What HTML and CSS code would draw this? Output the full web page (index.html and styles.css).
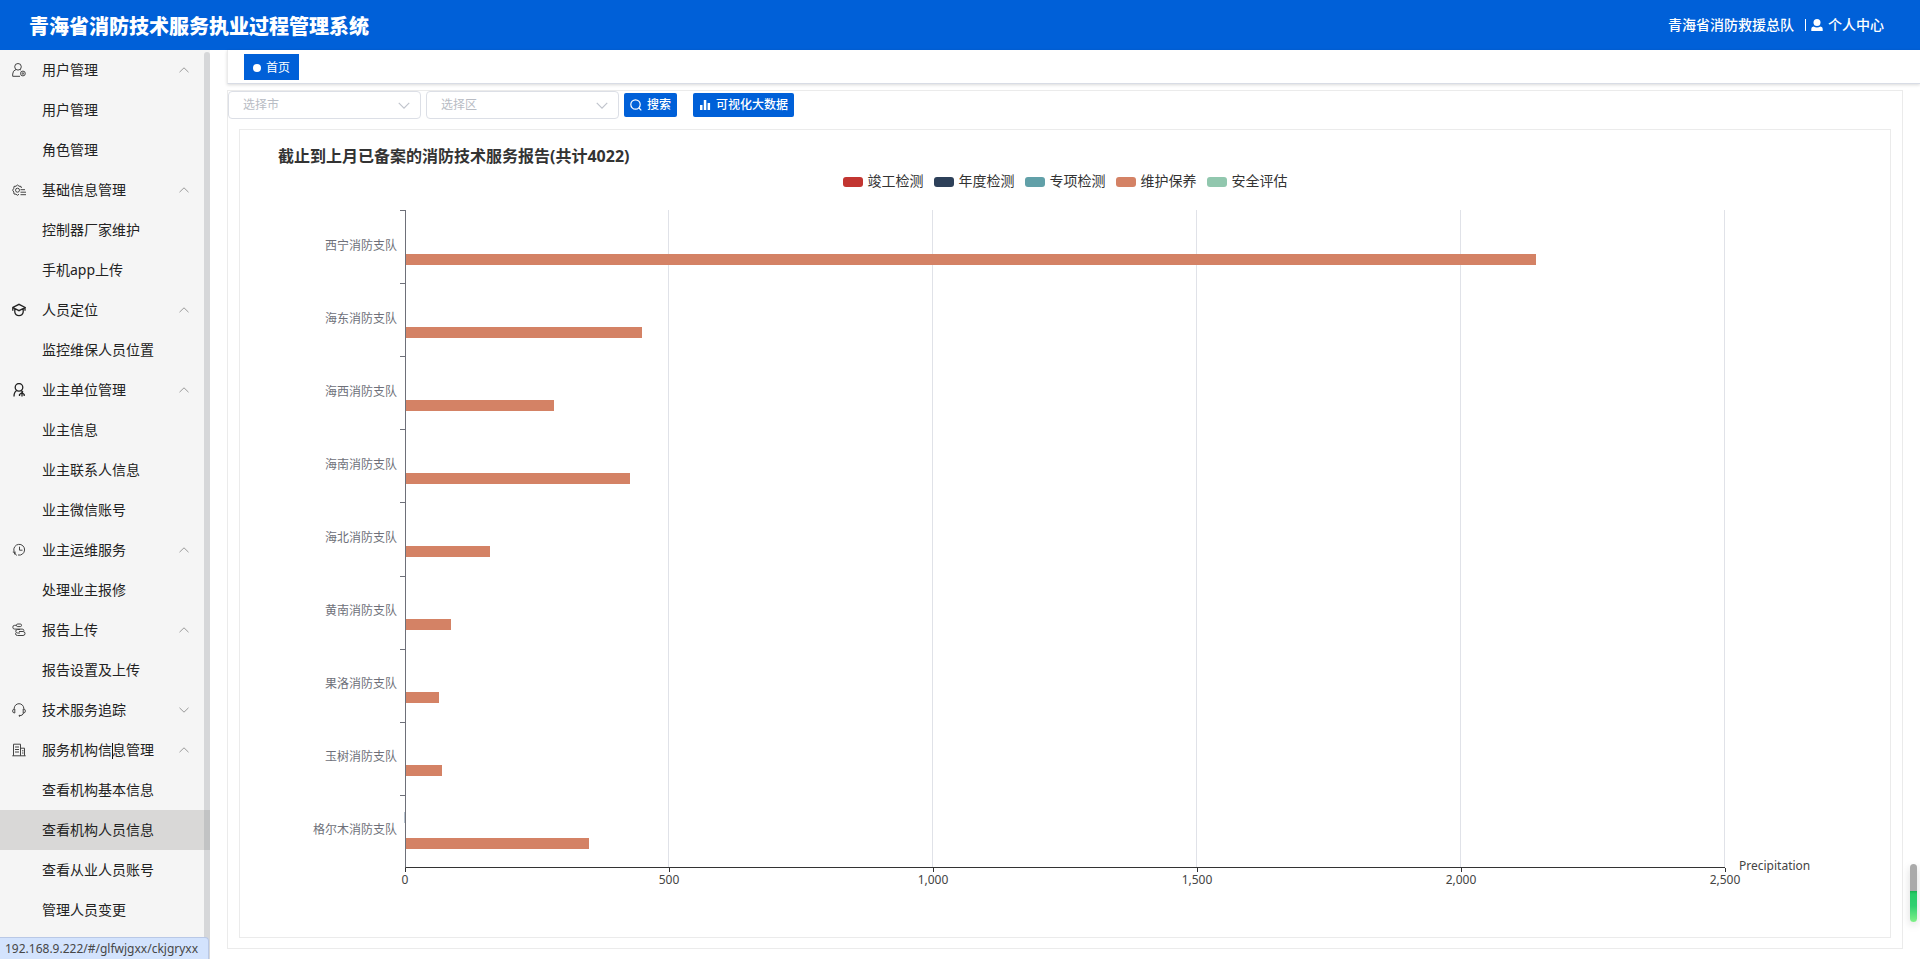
FILE: index.html
```html
<!DOCTYPE html>
<html lang="zh-CN">
<head>
<meta charset="utf-8">
<title>青海省消防技术服务执业过程管理系统</title>
<link rel="stylesheet" href="styles.css">
</head>
<body>
<svg class="defs" aria-hidden="true">
  <symbol id="up" viewBox="0 0 10 6"><path d="M.5 5.2 5 .8l4.500 4.400"/></symbol>
  <symbol id="down" viewBox="0 0 10 6"><path d="M.5.8 5 5.200 9.500.8"/></symbol>
</svg>
<header class="topbar">
  <h1 class="brand">青海省消防技术服务执业过程管理系统</h1>
  <div class="account">
    <span>青海省消防救援总队</span>
    <a class="profile" href="#me"><svg class="person" viewBox="0 0 12 12"><circle cx="6" cy="3.500" r="3.500"/><path d="M.3 12V9.800Q.3 8 2.500 7.600Q6 9.400 9.500 7.600Q11.700 8 11.700 9.800V12z"/></svg>个人中心</a>
  </div>
</header>
<div class="shell">
  <nav class="sidebar">
    <div class="menu">
      <button class="group"><svg class="icon" viewBox="0 0 14 14"><circle cx="6" cy="3.800" r="3.300"/><path d="M4 6.500Q.7 7.700.7 11v2.300h7.300M8 6.500l.8.500"/><circle cx="10.900" cy="10.500" r="2.400"/><circle cx="10.900" cy="10.500" r=".8"/></svg><span>用户管理</span><svg class="arrow"><use href="#up"/></svg></button>
      <a class="item" href="#yhgl">用户管理</a>
      <a class="item" href="#jsgl">角色管理</a>
      <button class="group"><svg class="icon" viewBox="0 0 14 14"><path d="M7 11.200 5.500 12.300 4 11.200 2 11 1.800 9 .6 7.200 1.800 5.300 2 3.400 4 3.200 5.500 2 7 3.200 9 3.400 9.400 5"/><circle cx="5.500" cy="7.200" r="2"/><path d="M8.500 6.700H13M8.500 9.200h5.500M8.500 11.700H14"/></svg><span>基础信息管理</span><svg class="arrow"><use href="#up"/></svg></button>
      <a class="item" href="#kzq">控制器厂家维护</a>
      <a class="item" href="#app">手机app上传</a>
      <button class="group"><svg class="icon dark" viewBox="0 0 14 14"><path d="M.8 7.800V4.500L7 1.300l6.200 3.200L7 7.700.8 4.500M2.800 5.700v3.500Q3.500 12.700 7 12.700t4.200-3.500V5.700M13 4.800v3"/></svg><span>人员定位</span><svg class="arrow"><use href="#up"/></svg></button>
      <a class="item" href="#jkwb">监控维保人员位置</a>
      <button class="group"><svg class="icon dark" viewBox="0 0 14 14"><circle cx="7" cy="4.300" r="3.800"/><path d="M4.800 7.500Q2 9 2 13.500M9.200 7.500l1.800 1.800M7.500 13v-1.500l2.500-2 2.200 2V13M10 10.500v3"/></svg><span>业主单位管理</span><svg class="arrow"><use href="#up"/></svg></button>
      <a class="item" href="#yzxx">业主信息</a>
      <a class="item" href="#yzlxr">业主联系人信息</a>
      <a class="item" href="#yzwx">业主微信账号</a>
      <button class="group"><svg class="icon" viewBox="0 0 14 14"><path d="M2 8.200A5.400 5.400 0 1 1 6 12M7.500 3.700v3.500h3M.8 9l3 .2M2 8.500l.8 3M2.500 9.500l2 3"/></svg><span>业主运维服务</span><svg class="arrow"><use href="#up"/></svg></button>
      <a class="item" href="#clbx">处理业主报修</a>
      <button class="group"><svg class="icon" viewBox="0 0 14 14"><path d="M4.500 2.300H2.700a1.900 1.900 0 0 0 0 3.800h7.500a1.800 1.800 0 0 1 1.800 1.700M8 6.500H5.500a1.700 1.700 0 0 0 0 3.500H8M3.500 10v.5a2 2 0 0 0 2 2h5.500a2 2 0 0 0 0-4H7"/><rect x="4.500" y="1" width="5" height="2.600" rx="1.200"/></svg><span>报告上传</span><svg class="arrow"><use href="#up"/></svg></button>
      <a class="item" href="#bgsz">报告设置及上传</a>
      <button class="group"><svg class="icon" viewBox="0 0 14 14"><path d="M2.200 6V5.500a4.800 4.800 0 0 1 9.600 0V6M2.800 6v4Q.6 10 .6 8t2.200-2M11.200 6v4q2.200 0 2.200-2t-2.200-2M11.600 10Q11 12.800 7 12.800"/><circle cx="7.500" cy="12.800" r=".5"/></svg><span>技术服务追踪</span><svg class="arrow"><use href="#down"/></svg></button>
      <button class="group"><svg class="icon" viewBox="0 0 14 14"><path d="M.3 12.800h13.400M1.500 12.800V1.200h7v11.600M8.500 5.200h4v7.600M3 4h4M3 6.500h4M3 9h4M10 7.800h1.500M10 10h1.500"/></svg><span class="hovered">服务机构信息管理</span><svg class="arrow"><use href="#up"/></svg></button>
      <a class="item" href="#ckjgjbxx">查看机构基本信息</a>
      <a class="item active" href="#ckjgryxx">查看机构人员信息</a>
      <a class="item" href="#ckcyry">查看从业人员账号</a>
      <a class="item" href="#glrybg">管理人员变更</a>
    </div>
    <div class="scrollbar"></div>
  </nav>
  <main class="main">
    <div class="tabs"><a class="tab" href="#home"><span class="dot"></span>首页</a></div>
    <section class="page">
      <form class="filters">
        <div class="picker"><select aria-label="选择市"><option>选择市</option></select><svg><use href="#down"/></svg></div>
        <div class="picker"><select aria-label="选择区"><option>选择区</option></select><svg><use href="#down"/></svg></div>
        <button type="button" class="action"><svg viewBox="0 0 12 12" class="line"><circle cx="5.500" cy="5.500" r="4.700"/><path d="m9 9 2.300 2.300"/></svg>搜索</button>
        <button type="button" class="action wide"><svg viewBox="0 0 12 12"><path d="M1 6h2.500v5H1zM4.800 1h2.500v10H4.800zM8.600 4h2.500v7H8.600z"/></svg>可视化大数据</button>
      </form>
      <section class="panel">
        <h2 class="title">截止到上月已备案的消防技术服务报告(共计4022)</h2>
        <ul class="legend">
          <li><i class="red"></i>竣工检测</li>
          <li><i class="navy"></i>年度检测</li>
          <li><i class="teal"></i>专项检测</li>
          <li><i class="coral"></i>维护保养</li>
          <li><i class="mint"></i>安全评估</li>
        </ul>
        <div class="chart">
          <div class="names">
            <span>西宁消防支队</span><span>海东消防支队</span><span>海西消防支队</span><span>海南消防支队</span><span>海北消防支队</span><span>黄南消防支队</span><span>果洛消防支队</span><span>玉树消防支队</span><span>格尔木消防支队</span>
          </div>
          <div class="gridlines"><i></i><i></i><i></i><i></i><i></i></div>
          <div class="bars">
            <div><b style="width:85.700%"></b></div>
            <div><b style="width:17.900%"></b></div>
            <div><b style="width:11.200%"></b></div>
            <div><b style="width:17%"></b></div>
            <div><b style="width:6.400%"></b></div>
            <div><b style="width:3.400%"></b></div>
            <div><b style="width:2.500%"></b></div>
            <div><b style="width:2.700%"></b></div>
            <div><em></em><b style="width:13.850%"></b></div>
          </div>
          <span class="axis-name">Precipitation</span>
          <div class="scale"><span>0</span><span>500</span><span>1,000</span><span>1,500</span><span>2,000</span><span>2,500</span></div>
        </div>
      </section>
    </section>
  </main>
</div>
<div class="status">192.168.9.222/#/glfwjgxx/ckjgryxx</div>
<div class="meter"></div>
</body>
</html>
```
FILE: styles.css
```css
* { box-sizing: border-box; }
body {
  margin: 0;
  height: 100vh;
  display: flex;
  flex-direction: column;
  overflow: hidden;
  background: #fff;
  color: #303133;
  font: 14px/20px "Noto Sans", "Noto Sans CJK SC", sans-serif;
}
a { color: inherit; text-decoration: none; }
button, select { font: inherit; }
ul { list-style: none; margin: 0; padding: 0; }
.defs { display: none; }

.topbar {
  flex: none;
  height: 50px;
  padding: 0 36px 0 29px;
  display: flex;
  align-items: center;
  justify-content: space-between;
  background: #0060d8;
  color: #fff;
}
.brand { margin: 0; padding-top: 1px; font-family: "Noto Sans CJK SC", sans-serif; font-size: 20px; line-height: 28px; font-weight: 900; }
.account { display: flex; align-items: center; gap: 11px; font-weight: 500; }
.profile { display: flex; align-items: center; gap: 5px; }
.profile::before { content: ""; width: 1px; height: 12px; background: #fff; }
.person { width: 12px; height: 12px; fill: #fff; }

.shell { flex: 1; min-height: 0; display: flex; }
.sidebar { flex: none; width: 210px; display: flex; position: relative; background: #f5f5f5; overflow: hidden; }
.menu { flex: 1; }
.group, .item {
  display: flex;
  align-items: center;
  width: 100%;
  height: 40px;
  padding: 0 21px 0 42px;
  border: 0;
  background: none;
  color: #222;
  text-align: left;
}
.group { padding-left: 12px; gap: 16px; }
.group span { flex: 1; }
.active { background: #d9d8d7; }
.icon { flex: none; width: 14px; height: 14px; fill: none; stroke: #444; stroke-width: 1; }
.icon.dark { stroke: #222; stroke-width: 1.3; }
.arrow { width: 10px; height: 6px; fill: none; stroke: #999; stroke-width: 1; }
.hovered { position: relative; }
.hovered::after { content: ""; position: absolute; left: 70px; top: 3px; width: 1px; height: 16px; background: #111; }
.scrollbar { position: absolute; top: 2px; right: 0; bottom: 0; width: 6px; border-radius: 3px 3px 0 0; background: rgba(144, 147, 153, .3); }

.main { flex: 1; min-width: 0; display: flex; flex-direction: column; padding: 0 0 10px 17px; }
.tabs {
  height: 34px;
  padding: 4px 16px;
  display: flex;
  border-left: 1px solid #ebebeb;
  border-bottom: 1px solid #d8dce5;
  box-shadow: 0 1px 3px rgba(0, 0, 0, .15);
}
.tab { display: flex; align-items: center; gap: 5px; height: 26px; padding: 1px 9px 0; background: #0060d8; color: #fff; font-size: 12px; }
.dot { width: 8px; height: 8px; border-radius: 50%; background: #fff; }
.page { flex: 1; display: flex; flex-direction: column; margin: 6px 17px 0 0; border: 1px solid #ebebeb; padding: 0 11px 10px; }
.filters { display: flex; align-items: center; gap: 5px; height: 28px; margin-left: -11px; }
.picker { width: 193px; height: 28px; position: relative; }
.picker select {
  width: 100%;
  height: 100%;
  padding: 0 14px;
  appearance: none;
  border: 1px solid #dcdfe6;
  border-radius: 4px;
  background: #fff;
  color: #b8bcc4;
  font-size: 12px;
}
.picker svg { position: absolute; right: 11px; top: 11px; width: 12px; height: 7px; fill: none; stroke: #c0c4cc; pointer-events: none; }
.action {
  display: flex;
  align-items: center;
  gap: 5px;
  height: 24px;
  padding: 0 6px;
  border: 0;
  border-radius: 2px;
  background: #0060d8;
  color: #fff;
  font-size: 12px;
  font-weight: 500;
  white-space: nowrap;
}
.action.wide { margin-left: 11px; }
.action svg { width: 12px; height: 12px; fill: #fff; }
.action .line { fill: none; stroke: #fff; stroke-width: 1.2; }

.panel { flex: 1; display: flex; flex-direction: column; margin-top: 10px; border: 1px solid #ebebeb; padding: 16px 0 69px; }
.title { margin: 0 0 6px 38px; font-size: 16px; line-height: 20px; font-weight: 700; color: #333; }
.legend { display: flex; justify-content: center; gap: 10px; color: #333; line-height: 18px; }
.legend li { display: flex; align-items: center; gap: 5px; }
.legend i { width: 20px; height: 10px; margin-top: 2px; border-radius: 3px; }
.red { background: #c23531; }
.navy { background: #2d4059; }
.teal { background: #61a0a8; }
.coral { background: #d48265; }
.mint { background: #91c7ae; }

.chart { flex: 1; display: grid; grid-template: 1fr / 10% 1fr 10%; margin-top: 20px; font-size: 12px; line-height: 16px; }
.names, .bars { display: grid; grid-template-rows: repeat(9, 1fr); }
.names span { display: flex; align-items: center; justify-content: flex-end; color: #6e7079; padding: 0 8px 2px 0; background: linear-gradient(#6e7079, #6e7079) right top / 5px 1px no-repeat; white-space: nowrap; }
.gridlines, .bars { grid-area: 1 / 2; }
.gridlines { display: grid; grid-template-columns: repeat(5, 1fr); }
.gridlines i { border-right: 1px solid #e0e2e8; }
.bars { border-left: 1px solid #6e7079; border-bottom: 1px solid #333; }
.bars div { display: flex; flex-direction: column; justify-content: flex-end; padding-bottom: 18px; }
.bars b { height: 11px; background: #d48265; }
.bars em { width: 1px; height: 11px; margin: 0 0 15px -2px; background: #b8c4d0; }
.axis-name { grid-area: 1 / 3; align-self: end; margin: 0 0 -6px 14px; color: #444; }
.scale { grid-area: 2 / 2; height: 0; display: flex; justify-content: space-between; color: #444; }
.scale span { width: 0; display: flex; flex-direction: column; align-items: center; }
.scale span::before { content: ""; flex: none; width: 1px; height: 4px; background: #333; }

.status {
  position: fixed;
  left: 0;
  bottom: 0;
  width: 209px;
  height: 22px;
  padding: 0 5px;
  border: 1px solid #b9c8e6;
  border-width: 1px 1px 0 0;
  border-top-right-radius: 4px;
  background: #d3e3fd;
  color: #474747;
  font-size: 12px;
  line-height: 22px;
  white-space: nowrap;
}
.meter {
  position: fixed;
  right: 3px;
  bottom: 37px;
  width: 7px;
  height: 58px;
  border-radius: 4px;
  background: linear-gradient(#aaa 27px, #18b050 27px, #28cc68 30px, #30d070 42px, #80f088);
  box-shadow: 0 3px 8px rgba(0, 0, 0, .15);
}
```
